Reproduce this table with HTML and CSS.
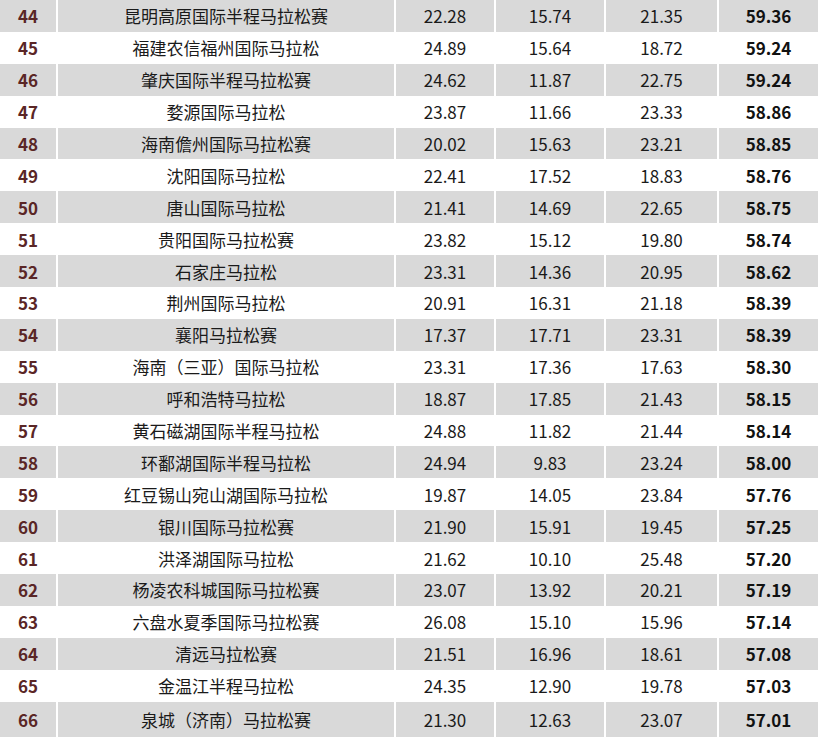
FILE: index.html
```html
<!DOCTYPE html>
<html lang="zh-CN">
<head>
<meta charset="utf-8">
<title>马拉松排名</title>
<link rel="stylesheet" href="styles.css">
</head>
<body>
<div class="table">
  <div class="row shade"><div class="rank">44</div><div class="name">昆明高原国际半程马拉松赛</div><div class="num">22.28</div><div class="num">15.74</div><div class="num">21.35</div><div class="total">59.36</div></div>
  <div class="row"><div class="rank">45</div><div class="name">福建农信福州国际马拉松</div><div class="num">24.89</div><div class="num">15.64</div><div class="num">18.72</div><div class="total">59.24</div></div>
  <div class="row shade"><div class="rank">46</div><div class="name">肇庆国际半程马拉松赛</div><div class="num">24.62</div><div class="num">11.87</div><div class="num">22.75</div><div class="total">59.24</div></div>
  <div class="row"><div class="rank">47</div><div class="name">婺源国际马拉松</div><div class="num">23.87</div><div class="num">11.66</div><div class="num">23.33</div><div class="total">58.86</div></div>
  <div class="row shade"><div class="rank">48</div><div class="name">海南儋州国际马拉松赛</div><div class="num">20.02</div><div class="num">15.63</div><div class="num">23.21</div><div class="total">58.85</div></div>
  <div class="row"><div class="rank">49</div><div class="name">沈阳国际马拉松</div><div class="num">22.41</div><div class="num">17.52</div><div class="num">18.83</div><div class="total">58.76</div></div>
  <div class="row shade"><div class="rank">50</div><div class="name">唐山国际马拉松</div><div class="num">21.41</div><div class="num">14.69</div><div class="num">22.65</div><div class="total">58.75</div></div>
  <div class="row"><div class="rank">51</div><div class="name">贵阳国际马拉松赛</div><div class="num">23.82</div><div class="num">15.12</div><div class="num">19.80</div><div class="total">58.74</div></div>
  <div class="row shade"><div class="rank">52</div><div class="name">石家庄马拉松</div><div class="num">23.31</div><div class="num">14.36</div><div class="num">20.95</div><div class="total">58.62</div></div>
  <div class="row"><div class="rank">53</div><div class="name">荆州国际马拉松</div><div class="num">20.91</div><div class="num">16.31</div><div class="num">21.18</div><div class="total">58.39</div></div>
  <div class="row shade"><div class="rank">54</div><div class="name">襄阳马拉松赛</div><div class="num">17.37</div><div class="num">17.71</div><div class="num">23.31</div><div class="total">58.39</div></div>
  <div class="row"><div class="rank">55</div><div class="name">海南（三亚）国际马拉松</div><div class="num">23.31</div><div class="num">17.36</div><div class="num">17.63</div><div class="total">58.30</div></div>
  <div class="row shade"><div class="rank">56</div><div class="name">呼和浩特马拉松</div><div class="num">18.87</div><div class="num">17.85</div><div class="num">21.43</div><div class="total">58.15</div></div>
  <div class="row"><div class="rank">57</div><div class="name">黄石磁湖国际半程马拉松</div><div class="num">24.88</div><div class="num">11.82</div><div class="num">21.44</div><div class="total">58.14</div></div>
  <div class="row shade"><div class="rank">58</div><div class="name">环鄱湖国际半程马拉松</div><div class="num">24.94</div><div class="num">9.83</div><div class="num">23.24</div><div class="total">58.00</div></div>
  <div class="row"><div class="rank">59</div><div class="name">红豆锡山宛山湖国际马拉松</div><div class="num">19.87</div><div class="num">14.05</div><div class="num">23.84</div><div class="total">57.76</div></div>
  <div class="row shade"><div class="rank">60</div><div class="name">银川国际马拉松赛</div><div class="num">21.90</div><div class="num">15.91</div><div class="num">19.45</div><div class="total">57.25</div></div>
  <div class="row"><div class="rank">61</div><div class="name">洪泽湖国际马拉松</div><div class="num">21.62</div><div class="num">10.10</div><div class="num">25.48</div><div class="total">57.20</div></div>
  <div class="row shade"><div class="rank">62</div><div class="name">杨凌农科城国际马拉松赛</div><div class="num">23.07</div><div class="num">13.92</div><div class="num">20.21</div><div class="total">57.19</div></div>
  <div class="row"><div class="rank">63</div><div class="name">六盘水夏季国际马拉松赛</div><div class="num">26.08</div><div class="num">15.10</div><div class="num">15.96</div><div class="total">57.14</div></div>
  <div class="row shade"><div class="rank">64</div><div class="name">清远马拉松赛</div><div class="num">21.51</div><div class="num">16.96</div><div class="num">18.61</div><div class="total">57.08</div></div>
  <div class="row"><div class="rank">65</div><div class="name">金温江半程马拉松</div><div class="num">24.35</div><div class="num">12.90</div><div class="num">19.78</div><div class="total">57.03</div></div>
  <div class="row shade last"><div class="rank">66</div><div class="name">泉城（济南）马拉松赛</div><div class="num">21.30</div><div class="num">12.63</div><div class="num">23.07</div><div class="total">57.01</div></div>
</div>
</body>
</html>
```

FILE: styles.css
```css
html, body {
  margin: 0;
  padding: 0;
  background: #ffffff;
}

body {
  font-family: "Noto Sans CJK SC", "Noto Sans", sans-serif;
  font-size: 17px;
  color: #1a1a1a;
  overflow: hidden;
}

.table {
  width: 818px;
  display: flex;
  flex-direction: column;
}

.row {
  display: grid;
  grid-template-columns: 56px 336px 98px 108px 111px 99px;
  column-gap: 2px;
  height: 31.9px;
}

.row.last {
  height: 35.5px;
}

.row > div {
  display: flex;
  align-items: center;
  justify-content: center;
  line-height: 1;
  white-space: nowrap;
}

.row.shade > div {
  background: #d9d9d9;
}

.rank {
  font-weight: 700;
  color: #5a2626;
  font-size: 17px;
}

.total {
  font-weight: 700;
  color: #111111;
}
```
